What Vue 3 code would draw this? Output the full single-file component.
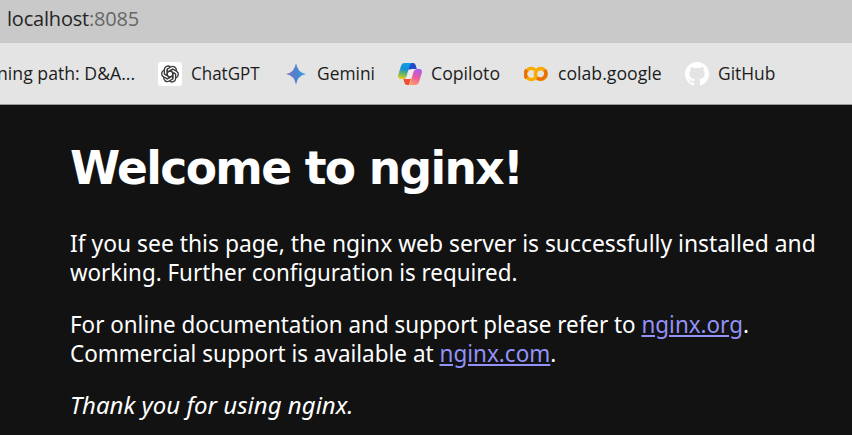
<script setup>
const petals = [0, 60, 120, 180, 240, 300]
</script>

<template>
  <div class="browser">
    <div class="address"><span>localhost</span><span class="port">:8085</span></div>
    <nav class="bookmarks">
      <span class="mark path"><span class="label">ning path: D&amp;A...</span></span>
      <svg class="icon gpt" viewBox="0 0 24 24">
        <rect width="24" height="24" rx="3" fill="#fff" />
        <g fill="none" stroke="#3c3c3c" stroke-width="1.35" stroke-linejoin="round">
          <path v-for="a in petals" :key="a" :transform="`rotate(${a} 12 12)`" d="M9.200 13.700V7.100L12.800 5a3.700 3.700 0 0 1 5.500 3.900M9.200 10.400l5.600-3.200" />
        </g>
      </svg>
      <span class="mark chatgpt"><span class="label">ChatGPT</span></span>
      <svg class="icon gemini" viewBox="0 0 20 22">
        <defs><linearGradient id="gem" x1="0" y1="0" x2="1" y2="0"><stop offset="0" stop-color="#8b70bd" /><stop offset=".5" stop-color="#4f83cc" /><stop offset="1" stop-color="#35a2e6" /></linearGradient></defs>
        <path fill="url(#gem)" d="M10 0Q11.500 9.500 20 11Q11.500 12.500 10 22Q8.500 12.500 0 11Q8.500 9.500 10 0Z" />
      </svg>
      <span class="mark gem"><span class="label">Gemini</span></span>
      <svg class="icon copilot" viewBox="0 0 24 22">
        <defs>
          <linearGradient id="ca" x1=".4" y1="0" x2=".2" y2="1"><stop offset="0" stop-color="#129de8" /><stop offset=".35" stop-color="#1590d4" /><stop offset=".65" stop-color="#60b66a" /><stop offset="1" stop-color="#f5ca13" /></linearGradient>
          <linearGradient id="cb" x1=".7" y1="0" x2=".3" y2="1"><stop offset="0" stop-color="#a95ced" /><stop offset=".5" stop-color="#ed5b9c" /><stop offset="1" stop-color="#ff9e61" /></linearGradient>
        </defs>
        <path fill="#204cc9" d="M11 0h4.200q1.800 0 2.300 1.800L18.800 6h-4.300q-1.500 0-2 .6l-2.500 0z" />
        <path fill="#ef5034" d="M13 15.500l-2 6.400H8.800q-1.600 0-2.100-1.700L5.300 16h3q1.700 0 2.400-.7z" />
        <path fill="url(#ca)" d="M6.500 0h7.200q-1.400.5-2 2.500L8.300 13.500Q7.500 16 5 16H2.700Q-.5 16 .2 12L3 3Q4 0 6.500 0z" />
        <path fill="url(#cb)" d="M17.500 22h-7.200q1.400-.5 2-2.500l3.400-11Q16.500 6 19 6h2.300q3.200 0 2.500 4L21 19q-1 3-3.500 3z" />
        <path fill="#f3edf0" d="M11.200 8.200Q11.800 6 14.800 6h1.700q-1 .6-1.500 2.500l-2.200 7Q12 16 9.600 16H7.800q1.300-.7 1.700-2.500z" />
      </svg>
      <span class="mark cop"><span class="label">Copiloto</span></span>
      <svg class="icon colab" viewBox="0 0 24 16">
        <g fill="none" stroke-width="3.600">
          <path stroke="#f9ab00" d="M11 4A5.500 5.500 0 1 0 11 12" />
          <circle cx="16.800" cy="8" r="5.400" stroke="#f9ab00" />
          <path stroke="#e8710a" d="M20.600 4.200A5.400 5.400 0 0 1 13 11.800M2.900 4A5.500 5.500 0 0 0 2.900 12" />
        </g>
      </svg>
      <span class="mark col"><span class="label">colab.google</span></span>
      <svg class="icon github" viewBox="0 0 16 16"><path fill="#fff" d="M8 0C3.580 0 0 3.580 0 8c0 3.540 2.290 6.530 5.470 7.590.4.070.55-.17.55-.38 0-.19-.01-.82-.01-1.490-2.010.37-2.530-.49-2.690-.94-.09-.23-.48-.94-.82-1.130-.28-.15-.68-.52-.01-.53.63-.01 1.080.58 1.230.82.72 1.210 1.870.87 2.330.66.07-.52.28-.87.51-1.070-1.780-.2-3.640-.89-3.640-3.950 0-.87.31-1.590.82-2.150-.08-.2-.36-1.020.08-2.120 0 0 .67-.21 2.200.82.64-.18 1.320-.27 2-.27s1.360.09 2 .27c1.530-1.040 2.200-.82 2.200-.82.44 1.100.16 1.920.08 2.120.51.56.82 1.270.82 2.150 0 3.070-1.870 3.750-3.650 3.950.29.25.54.73.54 1.480 0 1.070-.01 1.930-.01 2.200 0 .21.15.46.55.38A8.010 8.010 0 0 0 16 8c0-4.420-3.580-8-8-8z" /></svg>
      <span class="mark git"><span class="label">GitHub</span></span>
    </nav>
    <main class="page">
      <h1>Welcome to nginx!</h1>
      <p><span class="line l1">If you see this page, the nginx web server is successfully installed and</span><span class="line l2">working. Further configuration is required.</span></p>
      <p><span class="line l3">For online documentation and support please refer to <a>nginx.org</a>.</span><span class="line l4">Commercial support is available at <a>nginx.com</a>.</span></p>
      <p><em>Thank you for using nginx.</em></p>
    </main>
  </div>
</template>

<style>
body { background: #121212; overflow: hidden; }
</style>

<style scoped>
.browser { height: 435px; overflow: hidden; background: #121212; }
.address { box-sizing: border-box; height: 43px; padding: 5px 0 0 7px; background: #c9c9c9; color: #252525; font: 20px/28px "Open Sans", sans-serif; letter-spacing: -.2px; white-space: nowrap; }
.port { color: #666; }
.bookmarks { box-sizing: border-box; height: 62px; display: flex; align-items: center; background: #e4e4e4; border-bottom: 1px solid #999; font: 19px/28px "Open Sans", sans-serif; color: #1c1c1c; white-space: nowrap; }
.mark { flex: none; padding-bottom: 2px; }
.label { display: block; width: max-content; transform: scaleX(.915); transform-origin: left; }
.icon { flex: none; height: 24px; width: 24px; }
.path { box-sizing: border-box; width: 158px; }
.path .label { margin-left: -3px; transform: scaleX(.93); }
.chatgpt { width: 71px; margin-left: 9px; }
.chatgpt .label { transform: scaleX(.895); }
.gemini { width: 20px; height: 22px; margin-left: 24px; }
.gem { width: 70px; margin-left: 11px; }
.copilot { height: 22px; margin-left: 11px; }
.cop { width: 93px; margin-left: 9px; }
.cop .label { transform: scaleX(.93); }
.colab { height: 16px; }
.col { width: 127px; margin-left: 10px; }
.col .label { transform: scaleX(.93); }
.git { margin-left: 9px; }
.page { padding: 34px 0 0 70px; color: #fff; font: 24px/28.500px "Noto Sans", sans-serif; white-space: nowrap; }
h1 { width: max-content; margin: 0 0 33px; font: bold 47px/57px "DejaVu Sans", sans-serif; letter-spacing: -1.700px; transform: scaleX(.97); transform-origin: left; }
p { margin: 0 0 24px; }
.line { display: block; width: max-content; transform-origin: left; }
.l1 { transform: scaleX(.952); }
.l2 { transform: scaleX(.932); }
.l3 { transform: scaleX(.933); }
.l4 { transform: scaleX(.937); }
a { color: #9292f8; text-decoration: underline; }
</style>
